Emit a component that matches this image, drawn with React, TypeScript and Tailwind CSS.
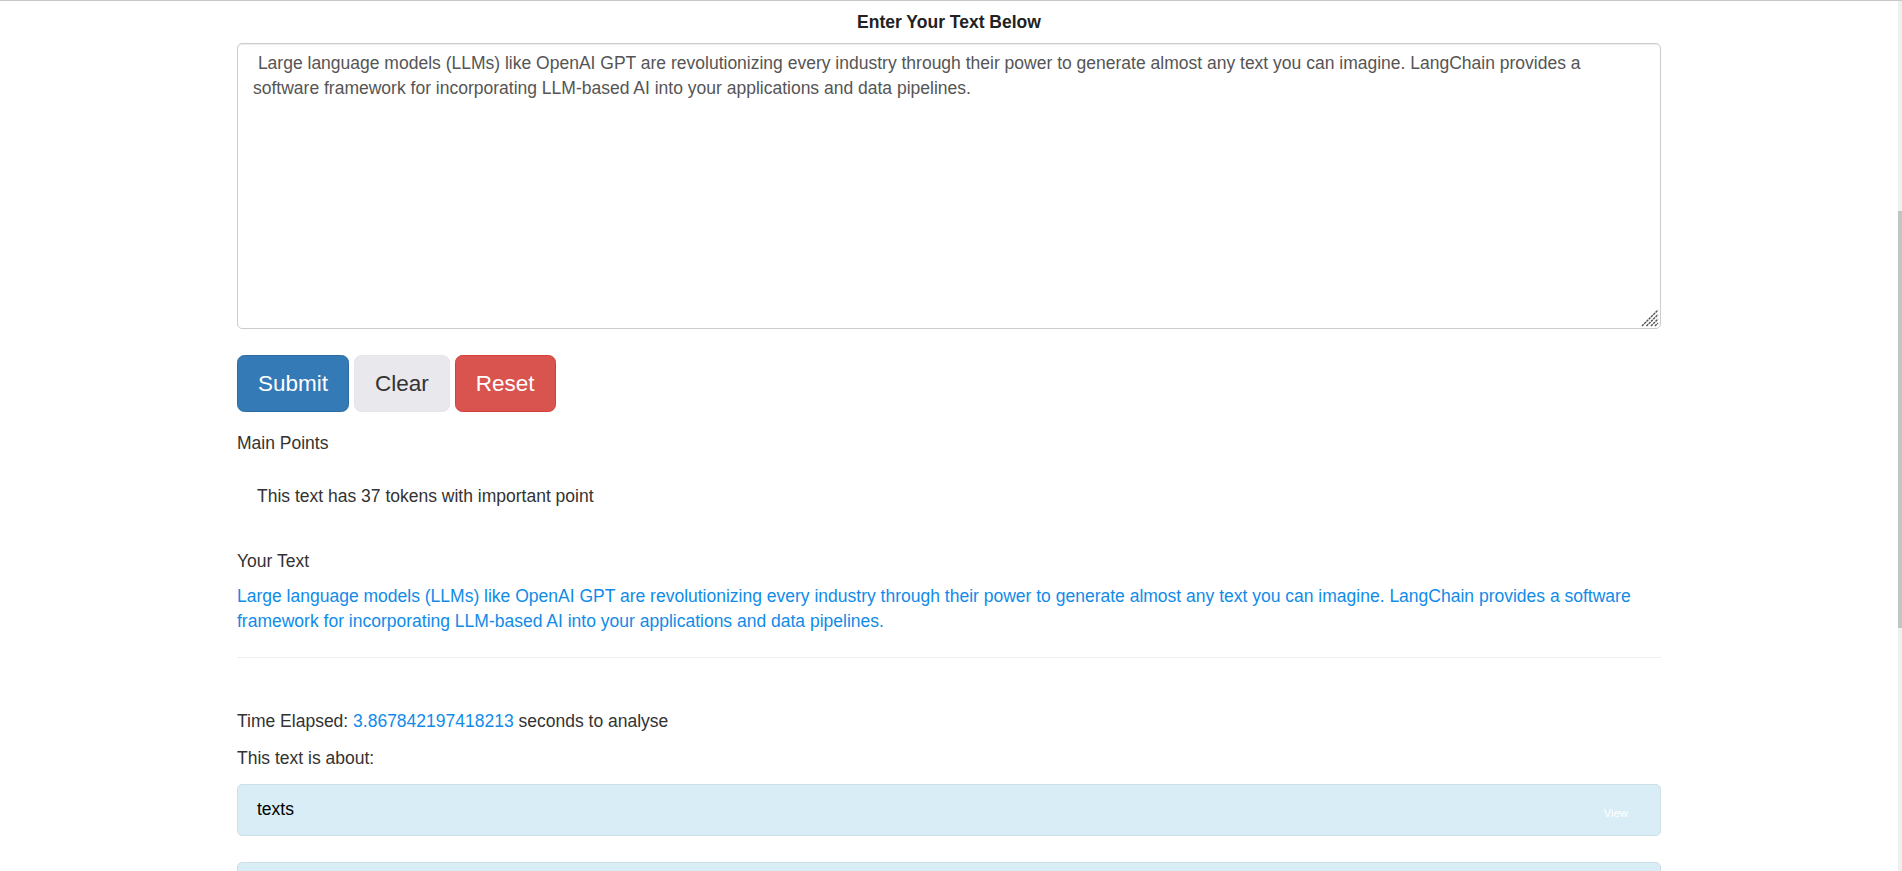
import React from "react";

const para =
  "Large language models (LLMs) like OpenAI GPT are revolutionizing every industry through their power to generate almost any text you can imagine. LangChain provides a software framework for incorporating LLM-based AI into your applications and data pipelines.";

export default function App() {
  return (
    <div
      className="h-[871px] w-full overflow-hidden flex flex-col bg-white text-[#333]"
      style={{ fontFamily: '"Liberation Sans", Arial, sans-serif' }}
    >
      <div className="h-px bg-[#c8c8c8] shrink-0" />
      <div className="flex-1 flex flex-row min-h-0">
        <div className="flex-1 min-w-0 overflow-hidden">
          <div className="w-[1424px] mx-auto text-[17.5px] leading-[25px]">
            <div className="mt-[8.5px] text-center font-bold text-[#222]">Enter Your Text Below</div>
            <div className="relative mt-[8px]">
              <textarea
                className="block w-full h-[286.5px] resize-none border border-[#ccc] rounded-[5px] px-[15px] py-[7.5px] text-[17.5px] leading-[25px] text-[#555] shadow-[inset_0_1px_1px_rgba(0,0,0,0.075)] outline-none"
                style={{ fontFamily: '"Liberation Sans", Arial, sans-serif' }}
                defaultValue={" " + para}
              />
              <svg
                className="absolute right-[2px] bottom-[2px] pointer-events-none"
                width="18"
                height="18"
                viewBox="0 0 18 18"
              >
                <g stroke="#555" strokeWidth="1.5" strokeDasharray="2.4 0.8">
                  <line x1="1" y1="17" x2="17" y2="1" />
                  <line x1="5.5" y1="17" x2="17" y2="5.5" />
                  <line x1="10" y1="17" x2="17" y2="10" />
                  <line x1="14" y1="17" x2="17" y2="14" />
                </g>
              </svg>
            </div>
            <div className="mt-[26px] flex gap-[5px]">
              <button className="h-[57px] px-[20px] rounded-[7.5px] border border-[#2e6da4] bg-[#337ab7] text-white text-[22.5px] leading-[30px]">
                Submit
              </button>
              <button className="h-[57px] px-[20px] rounded-[7.5px] border border-[#e6e5ea] bg-[#e9e8ed] text-[#333] text-[22.5px] leading-[30px]">
                Clear
              </button>
              <button className="h-[57px] px-[20px] rounded-[7.5px] border border-[#d43f3a] bg-[#d9534f] text-white text-[22.5px] leading-[30px]">
                Reset
              </button>
            </div>
            <div className="mt-[18.5px]">Main Points</div>
            <div className="mt-[28.5px] pl-[20px]">This text has 37 tokens with important point</div>
            <div className="mt-[39.5px]">Your Text</div>
            <div className="mt-[10px] text-[#118be8]">{para}</div>
            <div className="mt-[23.5px] h-px bg-[#eee]" />
            <div className="mt-[50.5px]">
              Time Elapsed: <span className="text-[#118be8]">3.867842197418213</span> seconds to analyse
            </div>
            <div className="mt-[12.5px]">This text is about:</div>
            <div className="mt-[12.5px] h-[52px] border border-[#cfdfe8] rounded-[5px] bg-[#d9edf7] flex items-center justify-between pl-[19px] pr-[32px]">
              <span className="text-black">texts</span>
              <span className="text-white text-[11.25px] leading-[14px] mt-[7px]">View</span>
            </div>
            <div className="mt-[26px] h-[52px] border border-[#cfdfe8] rounded-[5px] bg-[#d9edf7]" />
          </div>
        </div>
        <div className="w-[4px] shrink-0 bg-[#efefef] pt-[210px]">
          <div className="h-[417px] bg-[#c4c4c4]" />
        </div>
      </div>
    </div>
  );
}
